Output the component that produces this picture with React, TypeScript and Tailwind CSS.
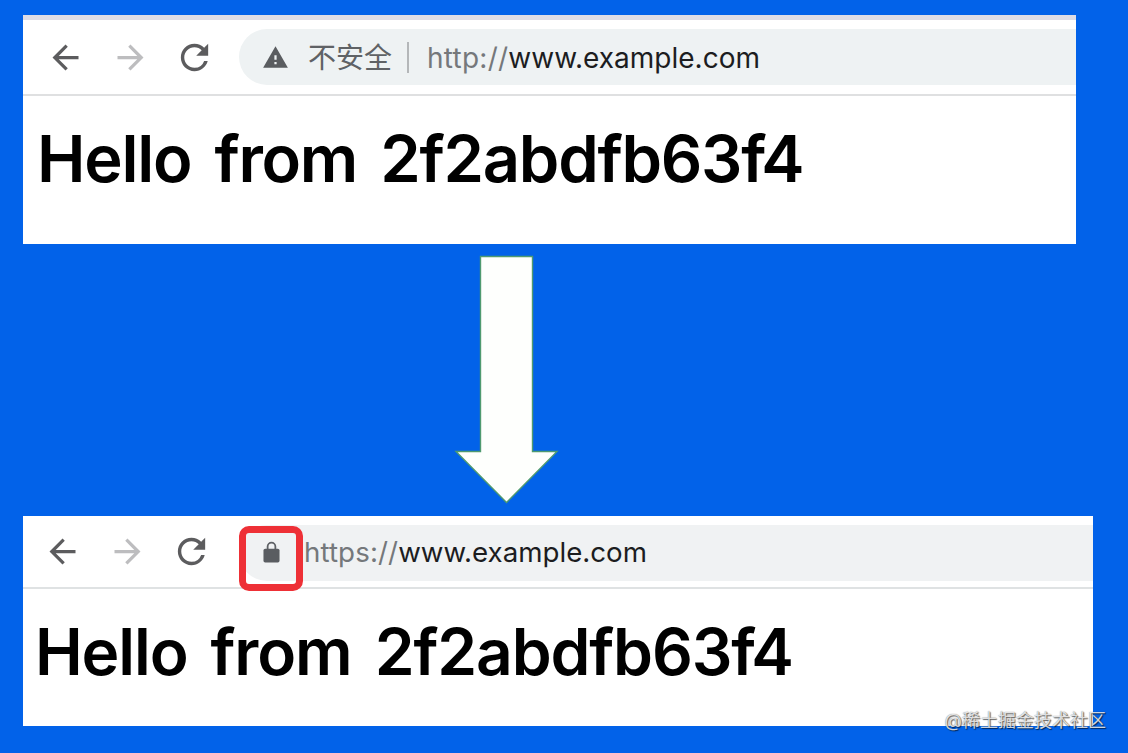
import React from "react";
import { MdArrowBack, MdArrowForward, MdRefresh, MdWarning } from "react-icons/md";

const LockIcon = () => (
  <svg width="17" height="24" viewBox="0 0 18 24" fill="none" className="mb-0.5 shrink-0">
    <path d="M4.9 9V6.2a4.1 4.1 0 0 1 8.2 0V9" stroke="#5f6266" strokeWidth="1.9" />
    <rect x="0.5" y="8.5" width="17" height="14.5" rx="1.8" fill="#5a5d61" />
  </svg>
);

const NavButtons = () => (
  <div className="flex shrink-0 items-center gap-[26px] text-[#5c5c5e]">
    <MdArrowBack size={39} />
    <MdArrowForward size={39} className="text-[#bdbdbf]" />
    <MdRefresh size={41} className="-ml-0.5" />
  </div>
);

const DownArrow = () => (
  <svg width="108" height="251" viewBox="0 0 108 251" className="ml-[429px] block">
    <path
      d="M28.5 2.5H80.5V197.5H105L54.5 248.5L4 197.5H28.5Z"
      fill="#fefffd"
      stroke="#4f9a70"
      strokeWidth="1.4"
    />
  </svg>
);

export default function App() {
  return (
    <div className="relative flex h-[753px] w-[1128px] flex-col overflow-hidden bg-[#0262e9] pt-[15px] pl-[23px] font-['Inter','Noto_Sans_CJK_SC',sans-serif]">
      <section className="h-[229px] w-[1053px] bg-white">
        <div className="h-[5px] bg-[#dedde6]" />
        <header className="flex h-[76px] items-center border-b-2 border-[#dfe0e1] pl-[23px]">
          <NavButtons />
          <div className="ml-[24px] flex h-14 flex-1 items-center rounded-l-full bg-[#eef2f3] pl-[23px]">
            <MdWarning size={27} className="shrink-0 text-[#5a5d60]" />
            <span className="ml-[19px] pt-0.5 text-[28px] leading-none text-[#5f6265]">不安全</span>
            <span className="ml-[15px] h-[31px] w-0.5 bg-[#b4b7b9]" />
            <span className="ml-[18px] pt-0.5 text-[28px] leading-none whitespace-nowrap text-[#75787b]">
              <span className="tracking-[0.25px]">http://</span>
              <span className="text-[#1c1d1f]">www.example.com</span>
            </span>
          </div>
        </header>
        <h1 className="mt-[23px] pl-[14px] text-[65px] leading-[80px] font-semibold tracking-[-1.25px] [word-spacing:8px] whitespace-nowrap text-black">
          Hello from 2f2abdfb63f4
        </h1>
      </section>

      <div className="mt-[10px] h-[251px]">
        <DownArrow />
      </div>

      <section className="mt-[11px] h-[210px] w-[1070px] bg-white">
        <header className="flex h-[73px] items-center border-b-2 border-[#dfe2e3] pl-[20px]">
          <NavButtons />
          <div className="relative mt-0.5 ml-[27px] flex h-14 flex-1 items-center rounded-l-full bg-[#f0f2f3] pl-[24px]">
            <LockIcon />
            <span className="ml-[24px] text-[27.7px] leading-none whitespace-nowrap text-[#75787b]">
              <span className="tracking-[0.1px]">https://</span>
              <span className="text-[#1c1d1f]">www.example.com</span>
            </span>
            <div className="absolute top-px left-0 h-[65px] w-[64px] rounded-[10px] border-[7px] border-[#ee3036]" />
          </div>
        </header>
        <h1 className="mt-[23px] pl-[12px] text-[64px] leading-[80px] font-semibold tracking-[-1.1px] [word-spacing:8px] whitespace-nowrap text-black">
          Hello from 2f2abdfb63f4
        </h1>
      </section>

      <div className="absolute right-[22px] bottom-[22px] text-[18px] leading-5 whitespace-nowrap text-white/80 [text-shadow:1px_1px_1px_rgba(0,0,0,0.6),0_0_1px_rgba(0,0,0,0.6)]">
        @稀土掘金技术社区
      </div>
    </div>
  );
}
